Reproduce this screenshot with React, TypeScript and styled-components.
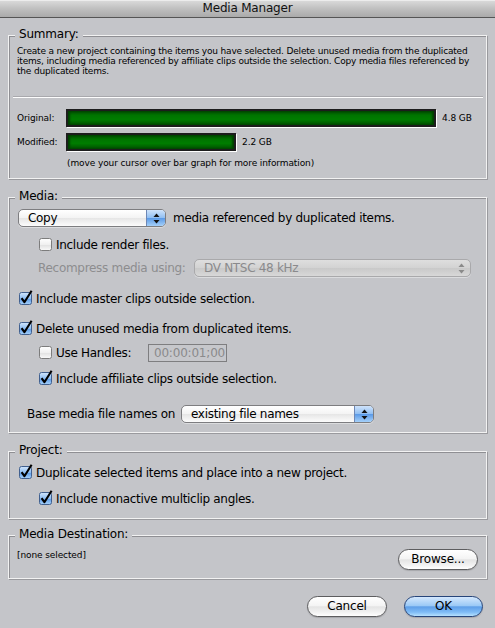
import React from "react";
import styled, { createGlobalStyle, css } from "styled-components";

const GlobalStyle = createGlobalStyle`
  html, body {
    margin: 0;
    padding: 0;
    background: #c4c5c9;
  }
  body {
    font-family: "DejaVu Sans", "Liberation Sans", sans-serif;
    color: #000;
  }
`;

const sizes = [
  { label: "Original:", value: 4.8 },
  { label: "Modified:", value: 2.2 },
];
const MAX_BAR = 370;
const maxValue = Math.max(...sizes.map((s) => s.value));

function CheckBox({ checked }: { checked?: boolean }) {
  return (
    <Check viewBox="0 0 15 16" width={15} height={16}>
      <defs>
        <linearGradient id="cbOff" x1="0" y1="0" x2="0" y2="1">
          <stop offset="0" stopColor="#ffffff" />
          <stop offset="0.5" stopColor="#f0f0f0" />
          <stop offset="0.55" stopColor="#e2e2e2" />
          <stop offset="1" stopColor="#fafafa" />
        </linearGradient>
        <linearGradient id="cbOn" x1="0" y1="0" x2="0" y2="1">
          <stop offset="0" stopColor="#d4e7fc" />
          <stop offset="0.5" stopColor="#8dbdf2" />
          <stop offset="0.55" stopColor="#5f9de8" />
          <stop offset="1" stopColor="#a9d3fa" />
        </linearGradient>
      </defs>
      <rect
        x="0.5"
        y="2.5"
        width="12"
        height="12"
        rx="2"
        fill={checked ? "url(#cbOn)" : "url(#cbOff)"}
        stroke={checked ? "#41608f" : "#7c7c7c"}
      />
      {checked && (
        <path
          d="M2.6 8.2 L5.4 12.2 L12.6 0.8"
          fill="none"
          stroke="#000"
          strokeWidth="2.1"
          strokeLinejoin="round"
        />
      )}
    </Check>
  );
}

function Arrows({ color }: { color: string }) {
  return (
    <svg width="7" height="11" viewBox="0 0 7 11">
      <path d="M3.5 0.5 L6.5 4 L0.5 4 Z" fill={color} />
      <path d="M3.5 10.5 L6.5 7 L0.5 7 Z" fill={color} />
    </svg>
  );
}

function PopUpButton({
  value,
  width,
  disabled,
}: {
  value: string;
  width: number;
  disabled?: boolean;
}) {
  return (
    <PopUp $width={width} $disabled={disabled}>
      <PopUpText $disabled={disabled}>{value}</PopUpText>
      <Stepper $disabled={disabled}>
        <Arrows color={disabled ? "#8a8a8a" : "#111"} />
      </Stepper>
    </PopUp>
  );
}

export default function App() {
  return (
    <Window>
      <GlobalStyle />
      <TitleBar>Media Manager</TitleBar>

      <Content>
        <Group $mt={17} $pb={10}>
          <Legend>Summary:</Legend>
          <Description>
            Create a new project containing the items you have selected. Delete unused media from the duplicated
            <br />
            items, including media referenced by affiliate clips outside the selection. Copy media files referenced by
            <br />
            the duplicated items.
          </Description>
          <Separator />
          {sizes.map((s, i) => (
            <BarRow key={s.label} $mt={i === 0 ? 11 : 5}>
              <BarLabel>{s.label}</BarLabel>
              <Bar style={{ width: Math.round((MAX_BAR * s.value) / maxValue) }} />
              <BarValue>{s.value} GB</BarValue>
            </BarRow>
          ))}
          <Note>(move your cursor over bar graph for more information)</Note>
        </Group>

        <Group $mt={18} $pb={9}>
          <Legend>Media:</Legend>
          <Row $mt={11} $indent={9}>
            <PopUpButton value="Copy" width={148} />
            <Label $gap={7}>media referenced by duplicated items.</Label>
          </Row>
          <Row $mt={9} $indent={30}>
            <CheckBox />
            <Label>Include render files.</Label>
          </Row>
          <Row $mt={5} $indent={29}>
            <Label $gap={0} $muted>
              Recompress media using:
            </Label>
            <Spacer />
            <PopUpButton value="DV NTSC 48 kHz" width={277} disabled />
          </Row>
          <Row $mt={13} $indent={10}>
            <CheckBox checked />
            <Label>Include master clips outside selection.</Label>
          </Row>
          <Row $mt={12} $indent={10}>
            <CheckBox checked />
            <Label>Delete unused media from duplicated items.</Label>
          </Row>
          <Row $mt={6} $indent={30}>
            <CheckBox />
            <Label $width={92}>Use Handles:</Label>
            <TimeField>00:00:01;00</TimeField>
          </Row>
          <Row $mt={8} $indent={30}>
            <CheckBox checked />
            <Label>Include affiliate clips outside selection.</Label>
          </Row>
          <Row $mt={17} $indent={18}>
            <Label $gap={0} $width={154}>
              Base media file names on
            </Label>
            <PopUpButton value="existing file names" width={193} />
          </Row>
        </Group>

        <Group $mt={18} $pb={10}>
          <Legend>Project:</Legend>
          <Row $mt={12} $indent={10}>
            <CheckBox checked />
            <Label>Duplicate selected items and place into a new project.</Label>
          </Row>
          <Row $mt={8} $indent={30}>
            <CheckBox checked />
            <Label>Include nonactive multiclip angles.</Label>
          </Row>
        </Group>

        <Group $mt={16} $pb={8}>
          <Legend>Media Destination:</Legend>
          <DestRow>
            <DestPath>[none selected]</DestPath>
            <PushButton $width={80}>Browse...</PushButton>
          </DestRow>
        </Group>

        <Footer>
          <PushButton $width={80}>Cancel</PushButton>
          <PushButton $width={79} $primary>
            OK
          </PushButton>
        </Footer>
      </Content>
    </Window>
  );
}

const Window = styled.div`
  width: 495px;
  height: 628px;
  overflow: hidden;
  background: #c4c5c9;
`;

const TitleBar = styled.div`
  height: 17px;
  line-height: 17px;
  text-align: center;
  font-size: 12px;
  letter-spacing: -0.2px;
  color: #111;
  background: linear-gradient(to bottom, #dcdcdc, #c0c0c0 50%, #aaaaaa);
  border-bottom: 1px solid #555;
  box-shadow: inset 0 1px 0 #ececec;
`;

const Content = styled.div`
  padding: 0 8px;
`;

const Group = styled.div<{ $mt: number; $pb: number }>`
  position: relative;
  margin-top: ${(p) => p.$mt}px;
  padding-bottom: ${(p) => p.$pb}px;
  border: 1px solid #f2f2f2;
  box-shadow: inset 1px 1px 0 #8f8f93, 1px 1px 0 #9a9a9e;
`;

const Legend = styled.div`
  position: absolute;
  top: -9px;
  left: 6px;
  padding: 0 4px;
  background: #c4c5c9;
  font-size: 12px;
  line-height: 15px;
  letter-spacing: -0.2px;
`;

const Description = styled.div`
  margin-top: 10px;
  padding-left: 8px;
  font-size: 9px;
  line-height: 10px;
  letter-spacing: -0.18px;
  white-space: nowrap;
`;

const Separator = styled.div`
  margin: 21px 3px 0 4px;
  height: 1px;
  background: #fdfdfd;
  box-shadow: 0 -1px 0 #a9a9ad;
`;

const BarRow = styled.div<{ $mt: number }>`
  display: flex;
  align-items: center;
  margin-top: ${(p) => p.$mt}px;
  height: 19px;
  font-size: 9px;
  letter-spacing: -0.1px;
`;

const BarLabel = styled.div`
  width: 57px;
  padding-left: 8px;
  box-sizing: border-box;
  margin-bottom: 1px;
`;

const Bar = styled.div`
  box-sizing: border-box;
  height: 18px;
  align-self: flex-start;
  border: 2px solid #1d1d1d;
  background: linear-gradient(
    to bottom,
    #004a00,
    #007400 30%,
    #007d00 60%,
    #004f00
  );
  box-shadow: 1px 1px 0 #ffffff, inset 2px 0 2px #004000, inset -2px 0 2px #004000;
`;

const BarValue = styled.div`
  margin-left: 6px;
  margin-bottom: 1px;
`;

const Note = styled.div`
  margin-top: 6px;
  padding-left: 58px;
  font-size: 9px;
  line-height: 10px;
  letter-spacing: -0.1px;
`;

const Row = styled.div<{ $mt: number; $indent: number }>`
  display: flex;
  align-items: center;
  height: 18px;
  margin-top: ${(p) => p.$mt}px;
  padding-left: ${(p) => p.$indent}px;
  padding-right: 15px;
  font-size: 12px;
  letter-spacing: -0.3px;
`;

const Check = styled.svg`
  flex: none;
  margin-top: -3px;
`;

const Label = styled.span<{ $gap?: number; $width?: number; $muted?: boolean }>`
  margin-left: ${(p) => (p.$gap ?? 2)}px;
  white-space: nowrap;
  color: ${(p) => (p.$muted ? "#8d8d8f" : "#000")};
  ${(p) =>
    p.$width &&
    css`
      width: ${p.$width}px;
      flex: none;
    `}
`;

const Spacer = styled.div`
  flex: 1;
`;

const PopUp = styled.div<{ $width: number; $disabled?: boolean }>`
  box-sizing: border-box;
  width: ${(p) => p.$width}px;
  height: 18px;
  display: flex;
  align-items: stretch;
  border: 1px solid ${(p) => (p.$disabled ? "#a9a9ab" : "#7d7d80")};
  border-radius: 5px;
  overflow: hidden;
  background: ${(p) =>
    p.$disabled
      ? "linear-gradient(to bottom, #dedede, #d2d2d2 50%, #c9c9c9 52%, #d8d8d8)"
      : "linear-gradient(to bottom, #ffffff, #f3f3f3 50%, #e6e6e6 52%, #fcfcfc)"};
  box-shadow: 0 1px 0 rgba(255, 255, 255, 0.4);
`;

const PopUpText = styled.div<{ $disabled?: boolean }>`
  flex: 1;
  padding-left: 9px;
  line-height: 16px;
  color: ${(p) => (p.$disabled ? "#8a8a8c" : "#000")};
  white-space: nowrap;
`;

const Stepper = styled.div<{ $disabled?: boolean }>`
  width: 18px;
  display: flex;
  align-items: center;
  justify-content: center;
  ${(p) =>
    p.$disabled
      ? css`
          border-left: 1px solid transparent;
        `
      : css`
          border-left: 1px solid #6d87b5;
          background: linear-gradient(
            to bottom,
            #cfe3fb,
            #8fbef2 50%,
            #5b9ae7 52%,
            #a5d0f9
          );
        `}
`;

const TimeField = styled.div`
  box-sizing: border-box;
  width: 79px;
  height: 18px;
  border: 1px solid #7e7e80;
  padding-left: 5px;
  line-height: 16px;
  color: #8a8a8c;
  background: #c6c7cb;
  letter-spacing: -0.2px;
`;

const DestRow = styled.div`
  display: flex;
  justify-content: space-between;
  align-items: flex-start;
  margin-top: 13px;
  padding: 0 8px;
`;

const DestPath = styled.div`
  font-size: 9px;
  line-height: 12px;
  letter-spacing: -0.1px;
`;

const PushButton = styled.div<{ $width: number; $primary?: boolean }>`
  box-sizing: border-box;
  width: ${(p) => p.$width}px;
  height: 21px;
  border-radius: 11px;
  text-align: center;
  font-size: 12px;
  line-height: 19px;
  letter-spacing: -0.2px;
  border: 1px solid ${(p) => (p.$primary ? "#27457a" : "#5d5d5f")};
  background: ${(p) =>
    p.$primary
      ? "linear-gradient(to bottom, #d4e8fd, #9ccaf6 45%, #5f9fe8 52%, #7fbcf6 80%, #b6e1fe)"
      : "linear-gradient(to bottom, #ffffff, #f4f4f4 45%, #e4e4e4 52%, #f2f2f2 80%, #ffffff)"};
  box-shadow: 0 1px 1px rgba(0, 0, 0, 0.15);
`;

const Footer = styled.div`
  display: flex;
  justify-content: flex-end;
  gap: 17px;
  margin-top: 17px;
  padding-right: 4px;
`;
